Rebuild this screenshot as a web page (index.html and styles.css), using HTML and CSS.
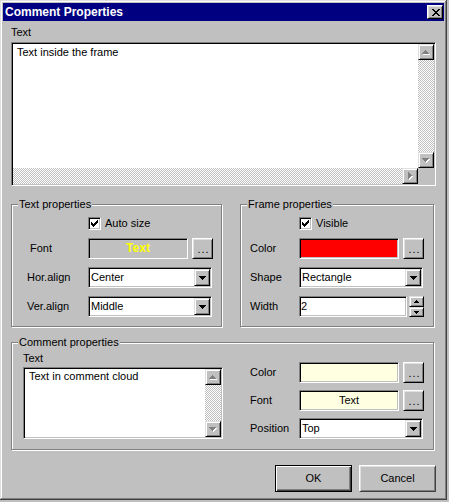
FILE: index.html
```html
<!DOCTYPE html>
<html>
<head>
<meta charset="utf-8">
<title>Comment Properties</title>
<link rel="stylesheet" href="styles.css">
</head>
<body>
<svg class="defs" width="0" height="0" aria-hidden="true">
  <defs>
    <path id="p-up" d="M3 0h1v1H3zM2 1h3v1H2zM1 2h5v1H1zM0 3h7v1H0z"/>
    <path id="p-down" d="M0 0h7v1H0zM1 1h5v1H1zM2 2h3v1H2zM3 3h1v1H3z"/>
    <path id="p-right" d="M0 0h1v7H0zM1 1h1v5H1zM2 2h1v3H2zM3 3h1v1H3z"/>
    <path id="p-sup" d="M2 0h1v1H2zM1 1h3v1H1zM0 2h5v1H0z"/>
    <path id="p-sdown" d="M0 0h5v1H0zM1 1h3v1H1zM2 2h1v1H2z"/>
    <path id="p-check" d="M6 0h1v1H6zM5 1h2v1H5zM0 2h1v1H0zM4 2h3v1H4zM0 3h2v1H0zM3 3h3v1H3zM0 4h5v1H0zM1 5h3v1H1zM2 6h1v1H2z"/>
  </defs>
</svg>
<div class="window">
  <div class="titlebar">
    <span class="title">Comment Properties</span>
    <span class="close"><svg width="8" height="7" viewBox="0 0 8 7"><path d="M0 0h2v1H0zM6 0h2v1H6zM1 1h2v1H1zM5 1h2v1H5zM2 2h4v1H2zM3 3h2v1H3zM2 4h4v1H2zM1 5h2v1H1zM5 5h2v1H5zM0 6h2v1H0zM6 6h2v1H6z" fill="#000"/></svg></span>
  </div>
  <div class="client">
    <div class="cap">Text</div>
    <div class="memo memo-main">
      <div class="memo-text">Text inside the frame</div>
      <div class="vscroll">
        <span class="sbtn"><svg width="8" height="5"><use href="#p-up" x="1" y="1" fill="#fff"/><use href="#p-up" fill="#808080"/></svg></span>
        <span class="track"></span>
        <span class="sbtn"><svg width="8" height="5"><use href="#p-down" x="1" y="1" fill="#fff"/><use href="#p-down" fill="#808080"/></svg></span>
      </div>
      <div class="hscroll">
        <span class="track"></span>
        <span class="sbtn"><svg width="5" height="8"><use href="#p-right" x="1" y="1" fill="#fff"/><use href="#p-right" fill="#808080"/></svg></span>
      </div>
      <div class="corner"></div>
    </div>

    <div class="groups">
      <div class="group g-text">
        <span class="legend">Text properties</span>
        <div class="form f-text">
          <label class="check"><span class="cbox"><svg width="7" height="7"><use href="#p-check" fill="#000"/></svg></span>Auto size</label>
          <span class="lbl lbl-font">Font</span>
          <div class="pick">
            <span class="swatch font-sample">Text</span>
            <span class="btn dots">...</span>
          </div>
          <span class="lbl">Hor.align</span>
          <div class="combo"><span class="combo-text">Center</span><span class="drop"><svg width="7" height="4"><use href="#p-down" fill="#000"/></svg></span></div>
          <span class="lbl">Ver.align</span>
          <div class="combo"><span class="combo-text">Middle</span><span class="drop"><svg width="7" height="4"><use href="#p-down" fill="#000"/></svg></span></div>
        </div>
      </div>

      <div class="group g-frame">
        <span class="legend">Frame properties</span>
        <div class="form f-frame">
          <label class="check"><span class="cbox"><svg width="7" height="7"><use href="#p-check" fill="#000"/></svg></span>Visible</label>
          <span class="lbl">Color</span>
          <div class="pick">
            <span class="swatch red"></span>
            <span class="btn dots">...</span>
          </div>
          <span class="lbl">Shape</span>
          <div class="combo"><span class="combo-text">Rectangle</span><span class="drop"><svg width="7" height="4"><use href="#p-down" fill="#000"/></svg></span></div>
          <span class="lbl">Width</span>
          <div class="spinwrap">
            <span class="edit">2</span>
            <span class="spin">
              <span class="spin-up"><svg width="5" height="3"><use href="#p-sup" fill="#000"/></svg></span>
              <span class="spin-down"><svg width="5" height="3"><use href="#p-sdown" fill="#000"/></svg></span>
            </span>
          </div>
        </div>
      </div>
    </div>

    <div class="group g-comment">
      <span class="legend">Comment properties</span>
      <div class="comment-body">
        <div class="comment-left">
          <div class="cap2">Text</div>
          <div class="memo memo-small">
            <div class="memo-text small-text">Text in comment cloud</div>
            <div class="vscroll">
              <span class="sbtn"><svg width="8" height="5"><use href="#p-up" x="1" y="1" fill="#fff"/><use href="#p-up" fill="#808080"/></svg></span>
              <span class="track"></span>
              <span class="sbtn"><svg width="8" height="5"><use href="#p-down" x="1" y="1" fill="#fff"/><use href="#p-down" fill="#808080"/></svg></span>
            </div>
          </div>
        </div>
        <div class="form f-comment">
          <span class="lbl">Color</span>
          <div class="pick">
            <span class="swatch cream"></span>
            <span class="btn dots">...</span>
          </div>
          <span class="lbl">Font</span>
          <div class="pick">
            <span class="swatch cream">Text</span>
            <span class="btn dots">...</span>
          </div>
          <span class="lbl">Position</span>
          <div class="combo"><span class="combo-text">Top</span><span class="drop"><svg width="7" height="4"><use href="#p-down" fill="#000"/></svg></span></div>
        </div>
      </div>
    </div>

    <div class="buttons">
      <button class="pbtn default">OK</button>
      <button class="pbtn">Cancel</button>
    </div>
  </div>
</div>
</body>
</html>
```
FILE: styles.css
```css
* { box-sizing: border-box; margin: 0; padding: 0; }
html, body { background: #c0c0c0; }
body {
  width: 449px;
  height: 502px;
  overflow: hidden;
  font: 11px/13px "Liberation Sans", Arial, sans-serif;
  color: #000;
}
.defs { position: absolute; width: 0; height: 0; overflow: hidden; }
svg { display: block; shape-rendering: crispEdges; }

.window {
  width: 447px;
  height: 500px;
  padding: 3px;
  background: #c0c0c0;
  box-shadow: inset -1px -1px #404040, inset 1px 1px #dfdfdf,
              inset -2px -2px #808080, inset 2px 2px #fff;
}
.titlebar {
  height: 18px;
  background: #000080;
  color: #fff;
  font-weight: bold;
  font-size: 12px;
  display: flex;
  align-items: center;
  justify-content: space-between;
  padding: 0 1px 0 2px;
}
.close {
  width: 16px;
  height: 14px;
  background: #c0c0c0;
  border: 1px solid;
  border-color: #fff #000 #000 #fff;
  box-shadow: inset 1px 1px #dfdfdf, inset -1px -1px #808080;
  display: flex;
  align-items: center;
  justify-content: center;
  padding-left: 1px;
}

.client { padding: 0 8px; }
.cap { margin-top: 5px; height: 13px; }

/* sunken fields */
.memo, .swatch, .combo, .edit, .cbox {
  border: 1px solid;
  border-color: #808080 #fff #fff #808080;
  box-shadow: inset 1px 1px #000, inset -1px -1px #c0c0c0;
}
.memo {
  background: #fff;
  padding: 1px;
  display: grid;
}
.memo-main {
  height: 144px;
  margin-top: 3px;
  grid-template-columns: 1fr 16px;
  grid-template-rows: 1fr 16px;
}
.memo-text { padding: 2px 4px 0; }
.small-text { padding-top: 1px; }
.vscroll { display: flex; flex-direction: column; }
.hscroll { display: flex; }
.corner { background: #c0c0c0; }
.track {
  flex: 1;
  background: repeating-conic-gradient(#fff 0 25%, #c0c0c0 0 50%) 0 0 / 2px 2px;
}
.sbtn {
  flex: none;
  width: 16px;
  height: 16px;
  background: #c0c0c0;
  border: 1px solid;
  border-color: #dfdfdf #000 #000 #dfdfdf;
  box-shadow: inset 1px 1px #fff, inset -1px -1px #808080;
  display: flex;
  align-items: center;
  justify-content: center;
}

/* group boxes */
.groups { display: flex; gap: 18px; margin-top: 18px; }
.group {
  position: relative;
  border: 1px solid #808080;
  box-shadow: 1px 1px 0 #fff, inset 1px 1px 0 #fff;
}
.legend {
  position: absolute;
  top: -7px;
  left: 6px;
  padding: 0 1px;
  background: #c0c0c0;
}
.g-text { width: 211px; height: 123px; padding: 12px 0 0 15px; }
.g-frame { width: 194px; height: 123px; padding: 12px 0 0 9px; }

.form {
  display: grid;
  grid-template-rows: 13px 21px 21px 21px;
  row-gap: 8px;
  align-items: center;
}
.f-text { grid-template-columns: 61px auto; }
.f-frame { grid-template-columns: 49px auto; }
.lbl-font { padding-left: 3px; }

.check {
  grid-column: 2;
  display: flex;
  align-items: center;
  gap: 4px;
}
.cbox {
  width: 13px;
  height: 13px;
  background: #fff;
  display: flex;
  align-items: center;
  justify-content: center;
}

.pick { display: flex; gap: 4px; }
.swatch {
  width: 100px;
  height: 21px;
  display: flex;
  align-items: center;
  justify-content: center;
}
.font-sample { background: #c0c0c0; color: #ffff00; font-weight: bold; font-size: 12px; }
.red { background: #ff0000; }
.cream { background: #ffffe1; }

.btn {
  background: #c0c0c0;
  border: 1px solid;
  border-color: #fff #000 #000 #fff;
  box-shadow: inset 1px 1px #dfdfdf, inset -1px -1px #808080;
}
.dots {
  width: 21px;
  height: 21px;
  display: flex;
  align-items: center;
  justify-content: center;
  padding: 2px 0 0 2px;
  letter-spacing: 1px;
}

.combo {
  width: 124px;
  height: 21px;
  background: #fff;
  padding: 1px;
  display: flex;
}
.combo-text { flex: 1; padding-left: 1px; line-height: 17px; }
.drop {
  width: 16px;
  height: 17px;
  background: #c0c0c0;
  border: 1px solid;
  border-color: #dfdfdf #000 #000 #dfdfdf;
  box-shadow: inset 1px 1px #fff, inset -1px -1px #808080;
  display: flex;
  align-items: center;
  justify-content: center;
}

.spinwrap { display: flex; gap: 2px; }
.edit {
  width: 108px;
  height: 21px;
  background: #fff;
  padding: 1px 1px;
  line-height: 17px;
}
.spin { width: 15px; height: 21px; display: flex; flex-direction: column; }
.spin-up, .spin-down {
  background: #c0c0c0;
  border: 1px solid;
  border-color: #dfdfdf #000 #000 #dfdfdf;
  box-shadow: inset 1px 1px #fff, inset -1px -1px #808080;
  display: flex;
  align-items: center;
  justify-content: center;
}
.spin-up { height: 11px; }
.spin-down { height: 10px; }

/* comment group */
.g-comment { width: 423px; height: 108px; margin-top: 15px; padding: 9px 0 0 11px; }
.comment-body { display: flex; }
.comment-left { width: 200px; }
.cap2 { height: 13px; }
.memo-small {
  height: 72px;
  margin-top: 2px;
  grid-template-columns: 1fr 16px;
}
.f-comment {
  margin-left: 27px;
  margin-top: 10px;
  grid-template-columns: 49px auto;
  grid-template-rows: 21px 21px 21px;
  row-gap: 7px;
}

/* push buttons */
.buttons { display: flex; justify-content: flex-end; gap: 7px; margin-top: 15px; }
.pbtn {
  width: 77px;
  height: 27px;
  font: inherit;
  color: #000;
  background: #c0c0c0;
  border: 1px solid;
  border-color: #fff #404040 #404040 #fff;
  box-shadow: inset 1px 1px #dfdfdf, inset -1px -1px #808080;
}
.pbtn.default {
  border-color: #000;
  box-shadow: inset 1px 1px #fff, inset -1px -1px #404040, inset -2px -2px #808080;
}
```
